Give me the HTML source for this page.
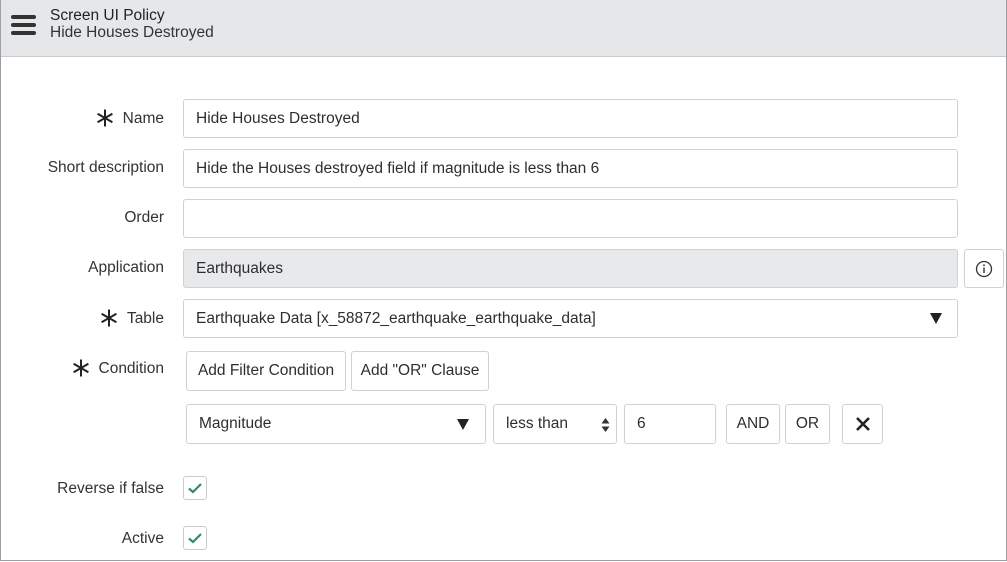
<!DOCTYPE html>
<html><head><style>
body{margin:0;width:1007px;height:562px;overflow:hidden;background:#fff;font-family:"Liberation Sans",sans-serif;color:#2e2e2e;position:relative}
.frame{position:absolute;left:0;top:0;width:1005px;height:560px;border:1px solid #9aa0a6;border-top:none}
.hdr{position:absolute;left:0;top:0;width:1007px;height:56px;background:#e6e7e9;border-bottom:1px solid #c9cbcd}
.ham{position:absolute;left:11px;width:25px;height:4px;background:#333;border-radius:2px}
.t1{position:absolute;left:50px;top:7px;font-size:15.5px;color:#222}
.t2{position:absolute;left:50px;top:24px;font-size:15.5px;color:#333}
.lbl{position:absolute;right:843px;font-size:15.5px;color:#333;text-align:right;white-space:nowrap}
.star{display:inline-block;width:18px;height:18px;vertical-align:-4px;margin-right:9px}
.box{position:absolute;border:1px solid #cfd2d5;border-radius:3px;background:#fff;box-sizing:border-box;font-size:15.5px;color:#2e2e2e;display:flex;align-items:center;padding-left:12px;white-space:nowrap}
.btn{justify-content:center;padding:0}
.tri{position:absolute;width:0;height:0;border-left:6px solid transparent;border-right:6px solid transparent;border-top:11px solid #222}
.chk{position:absolute;left:183px;width:24px;height:24px;border:1px solid #c9cccf;border-radius:3px;box-sizing:border-box}
</style></head><body>
<div class="hdr">
<div class="ham" style="top:15px"></div><div class="ham" style="top:23px"></div><div class="ham" style="top:31px"></div>
<div class="t1">Screen UI Policy</div><div class="t2">Hide Houses Destroyed</div>
</div>
<div class="frame"></div>

<div class="lbl" style="top:109px"><svg class="star" viewBox="0 0 18 18"><path d="M9 0.5V17.5M1.6 4.75L16.4 13.25M16.4 4.75L1.6 13.25" stroke="#222" stroke-width="2"/></svg>Name</div>
<div class="box" style="left:183px;top:99px;width:775px;height:39px">Hide Houses Destroyed</div>
<div class="lbl" style="top:159px">Short description</div>
<div class="box" style="left:183px;top:149px;width:775px;height:39px">Hide the Houses destroyed field if magnitude is less than 6</div>
<div class="lbl" style="top:209px">Order</div>
<div class="box" style="left:183px;top:199px;width:775px;height:39px"></div>
<div class="lbl" style="top:259px">Application</div>
<div class="box" style="left:183px;top:249px;width:775px;height:39px;background:#e8e9eb">Earthquakes</div>
<div class="box btn" style="left:964px;top:249px;width:40px;height:39px">
<svg width="18" height="18" viewBox="0 0 18 18"><circle cx="9" cy="9" r="7.5" fill="none" stroke="#333" stroke-width="1.3"/><rect x="8.3" y="7.5" width="1.4" height="5.5" fill="#333"/><circle cx="9" cy="5.2" r="0.9" fill="#333"/></svg></div>
<div class="lbl" style="top:309px"><svg class="star" viewBox="0 0 18 18"><path d="M9 0.5V17.5M1.6 4.75L16.4 13.25M16.4 4.75L1.6 13.25" stroke="#222" stroke-width="2"/></svg>Table</div>
<div class="box" style="left:183px;top:299px;width:775px;height:39px">Earthquake Data [x_58872_earthquake_earthquake_data]<div class="tri" style="left:746px;top:13px"></div></div>
<div class="lbl" style="top:359px"><svg class="star" viewBox="0 0 18 18"><path d="M9 0.5V17.5M1.6 4.75L16.4 13.25M16.4 4.75L1.6 13.25" stroke="#222" stroke-width="2"/></svg>Condition</div>
<div class="box btn" style="left:186px;top:351px;width:160px;height:40px">Add Filter Condition</div>
<div class="box btn" style="left:351px;top:351px;width:138px;height:40px">Add "OR" Clause</div>
<div class="box" style="left:186px;top:404px;width:300px;height:40px">Magnitude<div class="tri" style="left:270px;top:14px"></div></div>
<div class="box" style="left:493px;top:404px;width:124px;height:40px">less than
<svg style="position:absolute;left:107px;top:12px" width="9" height="16" viewBox="0 0 9 16"><path d="M4.5 1L8.5 6.5H0.5Z M4.5 15L8.5 9.5H0.5Z" fill="#333"/></svg></div>
<div class="box" style="left:624px;top:404px;width:92px;height:40px">6</div>
<div class="box btn" style="left:726px;top:404px;width:54px;height:40px">AND</div>
<div class="box btn" style="left:785px;top:404px;width:45px;height:40px">OR</div>
<div class="box btn" style="left:842px;top:404px;width:41px;height:40px">
<svg width="16" height="16" viewBox="0 0 16 16"><path d="M2 2L14 14M14 2L2 14" stroke="#222" stroke-width="2.6"/></svg></div>
<div class="lbl" style="top:480px">Reverse if false</div>
<div class="chk" style="top:476px"><svg width="22" height="22" viewBox="0 0 22 22"><path d="M5 11.5L9 15L17 7" fill="none" stroke="#2e8b6e" stroke-width="2.2"/></svg></div>
<div class="lbl" style="top:530px">Active</div>
<div class="chk" style="top:526px"><svg width="22" height="22" viewBox="0 0 22 22"><path d="M5 11.5L9 15L17 7" fill="none" stroke="#2e8b6e" stroke-width="2.2"/></svg></div>
</body></html>
